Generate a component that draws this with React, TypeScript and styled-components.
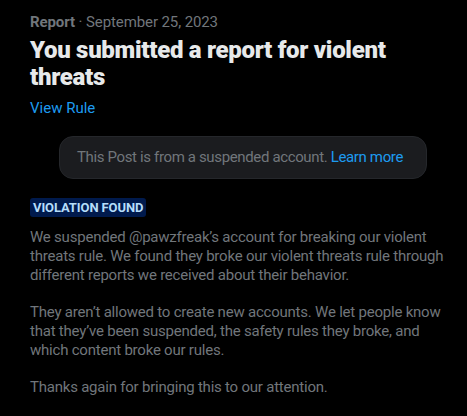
import React from "react";
import styled, { createGlobalStyle } from "styled-components";

const Global = createGlobalStyle`
  html, body { margin: 0; padding: 0; background: #000; }
  body { font-family: Roboto, "Liberation Sans", sans-serif; }
`;

const Page = styled.div`
  width: 467px;
  height: 416px;
  background: #000;
  box-sizing: border-box;
  padding: 12px 11px 0 30px;
  display: flex;
  flex-direction: column;
`;

const Meta = styled.div`
  font-size: 15px;
  line-height: 20px;
  color: #71767b;
  letter-spacing: -0.1px;
`;

const MetaStrong = styled.span`
  font-weight: 700;
`;

const Title = styled.h1`
  margin: 5px 0 0;
  font-size: 24px;
  line-height: 27px;
  font-weight: 900;
  color: #e7e9ea;
  letter-spacing: -0.3px;
`;

const Link = styled.a`
  color: #1d9bf0;
  text-decoration: none;
`;

const RuleLink = styled(Link)`
  margin-top: 7px;
  align-self: flex-start;
  font-size: 15px;
  line-height: 20px;
`;

const Notice = styled.div`
  margin: 18px 29px 0;
  height: 43px;
  box-sizing: border-box;
  padding: 0 17px;
  background: #1b1c1f;
  border: 1px solid #25272b;
  border-radius: 14px;
  font-size: 15px;
  line-height: 41px;
  color: #71767b;
  letter-spacing: -0.36px;
  white-space: nowrap;
`;

const Badge = styled.span`
  margin-top: 19px;
  align-self: flex-start;
  background: #001a4d;
  color: #b5ddfa;
  font-weight: 700;
  font-size: 13px;
  line-height: 19px;
  padding: 0 3px;
  border-radius: 3px;
  letter-spacing: -0.1px;
`;

const Body = styled.div`
  margin-top: 11px;
  font-size: 15px;
  line-height: 18.75px;
  color: #71767b;
  letter-spacing: -0.22px;
  display: flex;
  flex-direction: column;
  gap: 18.75px;
`;

const Para = styled.p`
  margin: 0;
`;

export default function App() {
  return (
    <>
      <Global />
      <Page>
        <Meta>
          <MetaStrong>Report</MetaStrong> · September 25, 2023
        </Meta>
        <Title>You submitted a report for violent threats</Title>
        <RuleLink href="#">View Rule</RuleLink>
        <Notice>
          This Post is from a suspended account. <Link href="#">Learn more</Link>
        </Notice>
        <Badge>VIOLATION FOUND</Badge>
        <Body>
          <Para>
            We suspended @pawzfreak’s account for breaking our violent threats rule. We found they
            broke our violent threats rule through different reports we received about their
            behavior.
          </Para>
          <Para>
            They aren’t allowed to create new accounts. We let people know that they’ve been
            suspended, the safety rules they broke, and which content broke our rules.
          </Para>
          <Para>Thanks again for bringing this to our attention.</Para>
        </Body>
      </Page>
    </>
  );
}
